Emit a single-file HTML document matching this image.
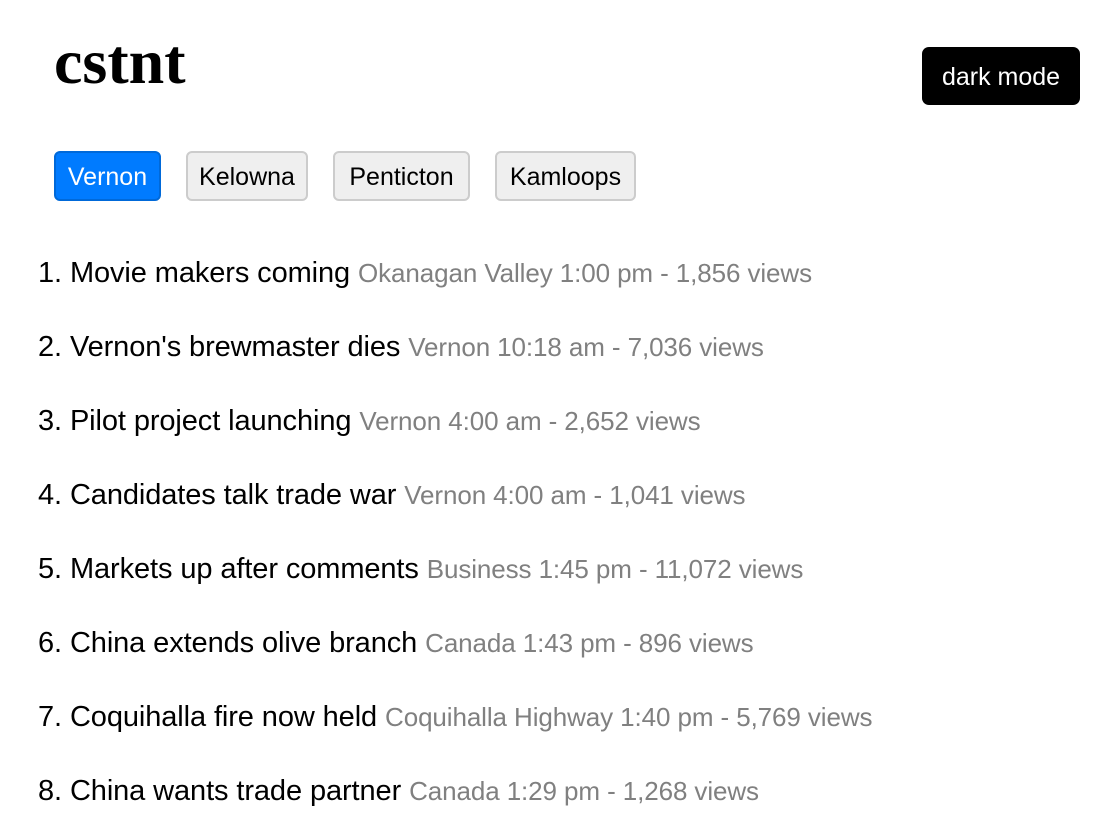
<!DOCTYPE html>
<html><head><meta charset="utf-8"><style>
body{margin:0;width:1118px;height:830px;background:#fff;font-family:"Liberation Sans",sans-serif;position:relative;overflow:hidden}
h1{position:absolute;left:54px;top:22px;margin:0;font:bold 64px "Liberation Serif",serif;line-height:80px}
.dm{position:absolute;left:922px;top:47px;width:158px;height:58px;background:#000;color:#fff;border-radius:7px;font-size:25px;line-height:60px;text-align:center}
.b{position:absolute;top:151px;height:50px;box-sizing:border-box;border:2px solid #ccc;background:#efefef;border-radius:6px;font-size:25px;line-height:48px;text-align:center;color:#000}
.b.on{background:#007bff;border-color:#0069d9;color:#fff}
.it{position:absolute;left:38px;font-size:29px;line-height:30px;color:#000;white-space:nowrap;letter-spacing:-0.1px}
.it span{color:#808080;font-size:26px;letter-spacing:-0.1px}
</style></head><body>
<h1>cstnt</h1>
<div class="dm">dark mode</div>
<div class="b on" style="left:54px;width:107px">Vernon</div>
<div class="b" style="left:186px;width:122px">Kelowna</div>
<div class="b" style="left:333px;width:137px">Penticton</div>
<div class="b" style="left:495px;width:141px">Kamloops</div>
<div class="it" style="top:258px">1. Movie makers coming <span>Okanagan Valley 1:00 pm - 1,856 views</span></div>
<div class="it" style="top:332px">2. Vernon's brewmaster dies <span>Vernon 10:18 am - 7,036 views</span></div>
<div class="it" style="top:406px">3. Pilot project launching <span>Vernon 4:00 am - 2,652 views</span></div>
<div class="it" style="top:480px">4. Candidates talk trade war <span>Vernon 4:00 am - 1,041 views</span></div>
<div class="it" style="top:554px">5. Markets up after comments <span>Business 1:45 pm - 11,072 views</span></div>
<div class="it" style="top:628px">6. China extends olive branch <span>Canada 1:43 pm - 896 views</span></div>
<div class="it" style="top:702px">7. Coquihalla fire now held <span>Coquihalla Highway 1:40 pm - 5,769 views</span></div>
<div class="it" style="top:776px">8. China wants trade partner <span>Canada 1:29 pm - 1,268 views</span></div>
</body></html>
